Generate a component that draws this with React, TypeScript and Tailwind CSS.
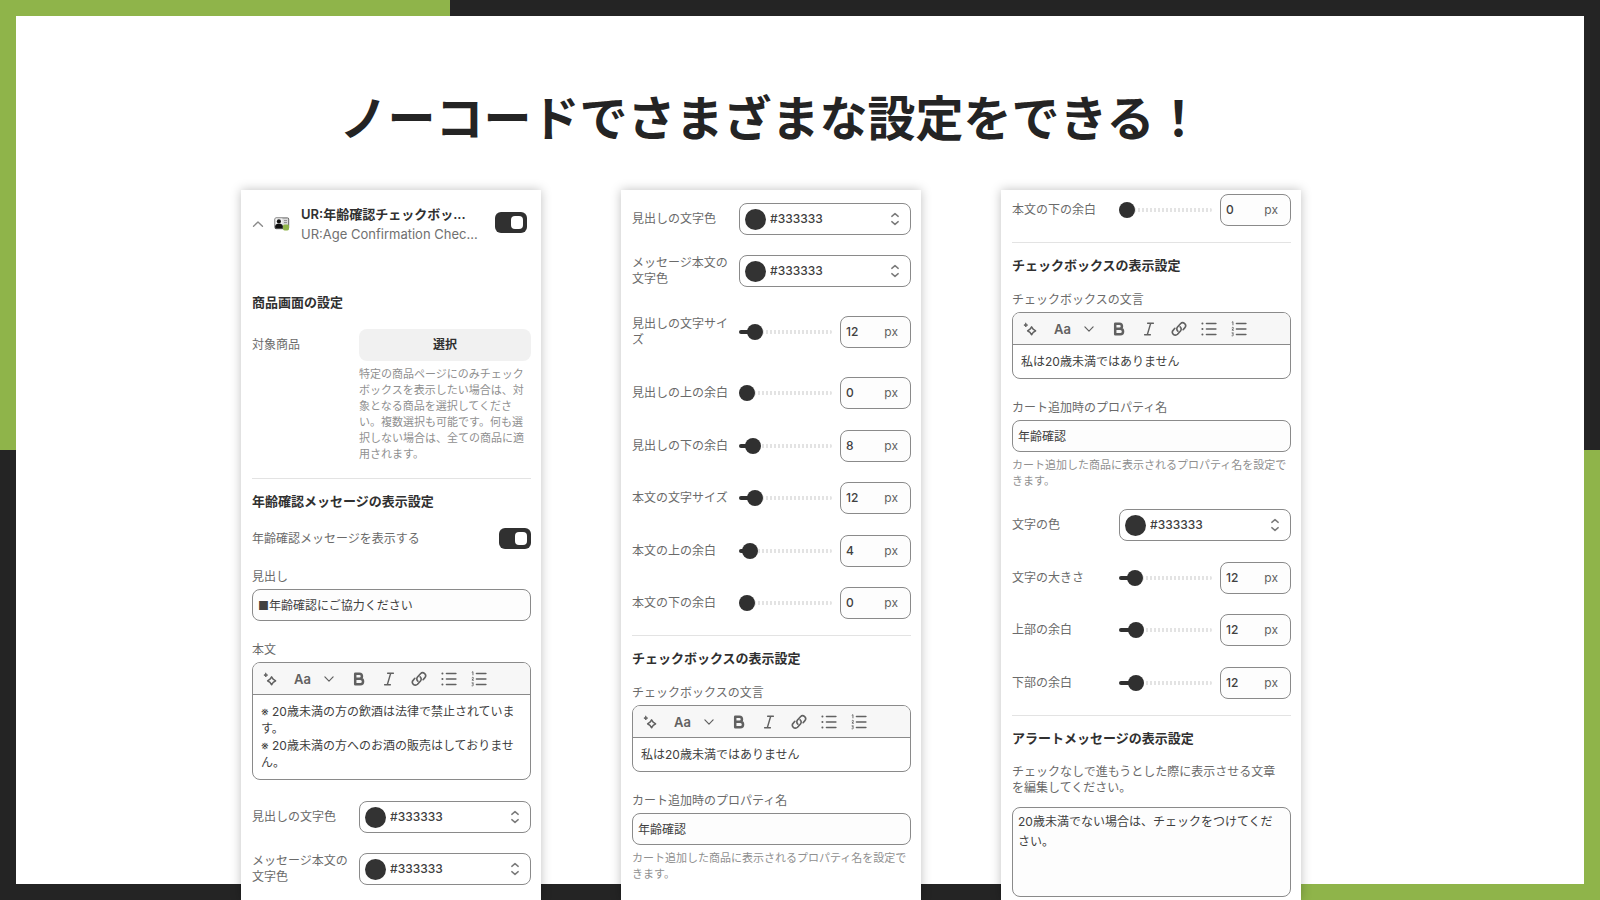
import { useId, useState } from 'react';
import type { CSSProperties, ReactNode } from 'react';
import clsx from 'clsx';

function Stroke({ children, size = 14 }: { children: ReactNode; size?: number }) {
  return (
    <svg
      width={size}
      height={size}
      viewBox="0 0 14 14"
      fill="none"
      stroke="currentColor"
      strokeWidth="1.4"
      strokeLinecap="round"
      strokeLinejoin="round"
      aria-hidden="true"
    >
      {children}
    </svg>
  );
}

const SparkleIcon = () => (
  <Stroke>
    <path d="M8.6 4.9 L10.2 7.2 L12.6 8.8 L10.2 10.4 L8.6 12.7 L7 10.4 L4.6 8.8 L7 7.2 Z" strokeWidth="1.5" />
    <path d="M2.8 1.2 L3.4 2.5 L4.7 3.1 L3.4 3.7 L2.8 5 L2.2 3.7 L0.9 3.1 L2.2 2.5 Z" fill="currentColor" strokeWidth="0.8" />
  </Stroke>
);

const BoldIcon = () => (
  <Stroke>
    <path d="M3.2 1.7 H7.4 A2.55 2.55 0 0 1 7.4 6.8 H3.2 Z M3.2 6.8 H8.3 A2.75 2.75 0 0 1 8.3 12.3 H3.2 Z" strokeWidth="2.5" />
  </Stroke>
);

const ItalicIcon = () => (
  <Stroke>
    <path d="M5.6 1.3 H11.4 M2.6 12.7 H8.4 M8.7 1.3 L5.3 12.7" />
  </Stroke>
);

const LinkIcon = () => (
  <Stroke size={16}>
    <path d="M6 8.9 A2.5 2.5 0 0 1 5.7 5.3 L8.3 2.4 A2.55 2.55 0 0 1 12 6 L10.6 7.6" />
    <path d="M8 5.1 A2.5 2.5 0 0 1 8.3 8.7 L5.7 11.6 A2.55 2.55 0 0 1 2 8 L3.4 6.4" />
  </Stroke>
);

const BulletListIcon = () => (
  <Stroke size={16}>
    <path d="M4.8 2.2 H13 M4.8 7 H13 M4.8 11.8 H13" />
    <path d="M1.2 2.2 H1.3 M1.2 7 H1.3 M1.2 11.8 H1.3" strokeWidth="1.7" />
  </Stroke>
);

const NumberListIcon = () => (
  <Stroke size={16}>
    <path d="M4.8 2.2 H13 M4.8 7 H13 M4.8 11.8 H13" />
    <path
      d="M1 1 L1.7 0.6 V3.4 M0.9 5.8 C1.4 5.2 2.3 5.5 2.1 6.3 L0.9 8 H2.3 M0.9 10.4 H2.1 L1.4 11.5 C2.6 11.5 2.4 13.4 0.9 13"
      strokeWidth="0.8"
    />
  </Stroke>
);

const ChevronDown = () => (
  <Stroke size={12}>
    <path d="M2.2 4.6 L7 9.4 L11.8 4.6" />
  </Stroke>
);

const ChevronUp = () => (
  <Stroke size={12}>
    <path d="M1.8 9.6 L7 4.6 L12.2 9.6" strokeWidth="1.6" />
  </Stroke>
);

const UpDownIcon = () => (
  <svg width="10" height="14" viewBox="0 0 10 14" fill="none" stroke="currentColor" strokeWidth="1.4" strokeLinecap="round" strokeLinejoin="round" aria-hidden="true">
    <path d="M1.8 4.4 L5 1.6 L8.2 4.4 M1.8 9.6 L5 12.4 L8.2 9.6" />
  </svg>
);

const AppIcon = () => (
  <svg width="16" height="14" viewBox="0 0 16 14" aria-hidden="true">
    <rect x="0.9" y="0.9" width="13.8" height="10.8" rx="1.2" fill="#dcdcdc" stroke="#555" strokeWidth="0.9" />
    <rect x="1.4" y="1.4" width="7" height="9.8" fill="#f4f4f4" />
    <circle cx="4.9" cy="4.4" r="2.1" fill="#111" />
    <path d="M1.2 11.4 V9.2 C1.2 7.4 3 6.8 5 6.8 S8.8 7.4 8.8 9.2 V11.4 Z" fill="#111" />
    <path d="M10 3.6 H13 M10 5.6 H13" stroke="#777" strokeWidth="0.8" />
    <rect x="9" y="7.4" width="6" height="6" rx="1.6" fill="#8fb44a" />
  </svg>
);

function Switch({ label, className }: { label: string; className?: string }) {
  const [on, setOn] = useState(true);
  return (
    <button
      type="button"
      role="switch"
      aria-checked={on}
      aria-label={label}
      onClick={() => setOn(!on)}
      className={clsx('flex h-[21px] w-8 shrink-0 items-center rounded-md px-1', on ? 'justify-end bg-[#303030]' : 'justify-start bg-[#8a8a8a]', className)}
    >
      <span className="h-[13px] w-3 rounded bg-white" />
    </button>
  );
}

function Heading({ children, className }: { children: ReactNode; className?: string }) {
  return <h2 className={clsx('text-[13px] leading-5 font-semibold text-[#303030]', className)}>{children}</h2>;
}

function Divider() {
  return <hr className="mt-4 mb-3 border-[#e3e3e3]" />;
}

function Help({ children }: { children: ReactNode }) {
  return <p className="mt-[5px] text-[11px] leading-4 text-[#8f8f8f]">{children}</p>;
}

function Row({ label, htmlFor, className, children }: { label: string; htmlFor: string; className?: string; children: ReactNode }) {
  return (
    <div className={clsx('flex min-h-8 items-center gap-2', className)}>
      <label htmlFor={htmlFor} className="w-[99px] shrink-0">
        {label}
      </label>
      <div className="flex min-w-0 flex-1 items-center gap-2">{children}</div>
    </div>
  );
}

function ColorRow({ label, className }: { label: string; className?: string }) {
  const id = useId();
  return (
    <Row label={label} htmlFor={id} className={className}>
      <div className="flex h-8 min-w-0 flex-1 items-center rounded-lg border border-[#8a8a8a] pr-[10px] pl-[5px] text-[#7a7a7a]">
        <span className="size-[21px] shrink-0 rounded-full bg-[#333333]" />
        <select id={id} defaultValue="#333333" className="h-full min-w-0 flex-1 appearance-none bg-transparent pl-1 font-medium text-[#404040]">
          <option>#333333</option>
          <option>#000000</option>
        </select>
        <UpDownIcon />
      </div>
    </Row>
  );
}

function SliderRow({ label, value, min = 0, max = 100, className }: { label: string; value: number; min?: number; max?: number; className?: string }) {
  const id = useId();
  const [current, setCurrent] = useState(value);
  const fill = { '--fill': `${((current - min) / (max - min)) * 100}%` } as CSSProperties;
  return (
    <Row label={label} htmlFor={id} className={className}>
      <input
        id={id}
        type="range"
        min={min}
        max={max}
        value={current}
        onChange={(e) => setCurrent(Number(e.target.value))}
        style={fill}
        className="h-4 min-w-0 flex-1 appearance-none bg-transparent [&::-webkit-slider-runnable-track]:h-1 [&::-webkit-slider-runnable-track]:rounded-full [&::-webkit-slider-runnable-track]:bg-[linear-gradient(to_right,#303030_var(--fill),transparent_var(--fill)),repeating-linear-gradient(to_left,#e3e3e3_0px,#e3e3e3_2px,transparent_2px,transparent_4px)] [&::-webkit-slider-thumb]:-mt-1.5 [&::-webkit-slider-thumb]:size-4 [&::-webkit-slider-thumb]:appearance-none [&::-webkit-slider-thumb]:rounded-full [&::-webkit-slider-thumb]:bg-[#303030]"
      />
      <div className="flex h-8 w-[71px] shrink-0 items-center rounded-lg border border-[#8a8a8a] bg-[#fdfdfd] pr-3 pl-[5px]">
        <input
          aria-label={`${label} (px)`}
          inputMode="numeric"
          value={current}
          onChange={(e) => setCurrent(Number(e.target.value) || 0)}
          className="min-w-0 flex-1 font-medium text-[#404040]"
        />
        <span className="text-[#616161]">px</span>
      </div>
    </Row>
  );
}

function TextField({ label, value, className }: { label: string; value: string; className?: string }) {
  const id = useId();
  return (
    <div className={clsx('flex flex-col gap-1', className)}>
      <label htmlFor={id}>{label}</label>
      <input id={id} defaultValue={value} className="h-8 rounded-lg border border-[#8a8a8a] bg-[#fdfdfd] px-[5px] pb-0.5 text-[#404040]" />
    </div>
  );
}

const tools = [
  { name: '太字', icon: <BoldIcon /> },
  { name: '斜体', icon: <ItalicIcon /> },
  { name: 'リンク', icon: <LinkIcon /> },
  { name: '箇条書き', icon: <BulletListIcon /> },
  { name: '番号付きリスト', icon: <NumberListIcon /> },
];

function Editor({ label, value, rows = 1, className }: { label: string; value: string; rows?: number; className?: string }) {
  const id = useId();
  return (
    <div className={clsx('flex flex-col gap-1', className)}>
      <label htmlFor={id}>{label}</label>
      <div className="overflow-hidden rounded-lg border border-[#8a8a8a]">
        <div className="flex h-8 items-center border-b border-[#8a8a8a] bg-[#f7f7f7] pl-0.5 text-[#616161]">
          <button type="button" aria-label="生成" className="flex w-[30px] justify-center">
            <SparkleIcon />
          </button>
          <button type="button" className="flex w-[59px] items-center justify-center gap-3 text-[13px] font-semibold">
            Aa
            <ChevronDown />
          </button>
          {tools.map((tool) => (
            <button key={tool.name} type="button" aria-label={tool.name} className="flex w-[30px] justify-center">
              {tool.icon}
            </button>
          ))}
        </div>
        <textarea id={id} rows={rows} defaultValue={value} className="block w-full resize-none overflow-hidden px-2 py-2 leading-[17px] text-[#404040]" />
      </div>
    </div>
  );
}

function Panel({ children, className }: { children: ReactNode; className?: string }) {
  return <section className={clsx('bg-white pr-[10px] pl-[11px] shadow-[0_0_10px_rgba(0,0,0,0.25)]', className)}>{children}</section>;
}

function CheckboxSettings() {
  return (
    <>
      <Divider />
      <Heading>チェックボックスの表示設定</Heading>
      <Editor className="mt-[17px]" label="チェックボックスの文言" value="私は20歳未満ではありません" />
      <TextField className="mt-[21px]" label="カート追加時のプロパティ名" value="年齢確認" />
      <Help>カート追加した商品に表示されるプロパティ名を設定できます。</Help>
    </>
  );
}

function MessagePanel() {
  return (
    <Panel className="pt-[14px]">
      <header className="flex items-center">
        <button type="button" aria-label="折りたたむ" className="w-[22px] text-[#8a8a8a]">
          <ChevronUp />
        </button>
        <AppIcon />
        <div className="ml-[11px] min-w-0 flex-1 text-[13px] leading-5 whitespace-nowrap">
          <p className="font-semibold text-[#303030]">UR:年齢確認チェックボッ...</p>
          <p className="text-[#707070]">UR:Age Confirmation Chec...</p>
        </div>
        <Switch label="アプリブロックを有効にする" className="mt-2 mr-1 self-start" />
      </header>

      <Heading className="mt-12">商品画面の設定</Heading>
      <div className="mt-[17px] flex gap-2">
        <span id="target-products" className="w-[99px] shrink-0 leading-8">
          対象商品
        </span>
        <div className="min-w-0 flex-1">
          <button type="button" aria-describedby="target-products" className="h-8 w-full rounded-lg bg-[#f1f1f1] font-bold text-[#303030]">
            選択
          </button>
          <Help>
            特定の商品ページにのみチェックボックスを表示したい場合は、対象となる商品を選択してください。複数選択も可能です。何も選択しない場合は、全ての商品に適用されます。
          </Help>
        </div>
      </div>

      <Divider />
      <Heading>年齢確認メッセージの表示設定</Heading>
      <div className="mt-[17px] flex items-center justify-between">
        <span>年齢確認メッセージを表示する</span>
        <Switch label="年齢確認メッセージを表示する" />
      </div>
      <TextField className="mt-5" label="見出し" value="■年齢確認にご協力ください" />
      <Editor
        className="mt-[21px]"
        label="本文"
        rows={4}
        value={'※ 20歳未満の方の飲酒は法律で禁止されています。\n※ 20歳未満の方へのお酒の販売はしておりません。'}
      />
      <ColorRow className="mt-[21px]" label="見出しの文字色" />
      <ColorRow className="mt-5" label="メッセージ本文の文字色" />
    </Panel>
  );
}

function StylePanel() {
  return (
    <Panel className="pt-[13px]">
      <ColorRow label="見出しの文字色" />
      <ColorRow className="mt-5" label="メッセージ本文の文字色" />
      <SliderRow className="mt-[29px]" label="見出しの文字サイズ" value={12} min={8} max={48} />
      <SliderRow className="mt-[29px]" label="見出しの上の余白" value={0} />
      <SliderRow className="mt-[21px]" label="見出しの下の余白" value={8} />
      <SliderRow className="mt-5" label="本文の文字サイズ" value={12} min={8} max={48} />
      <SliderRow className="mt-[21px]" label="本文の上の余白" value={4} />
      <SliderRow className="mt-5" label="本文の下の余白" value={0} />
      <CheckboxSettings />
    </Panel>
  );
}

function CheckboxPanel() {
  return (
    <Panel className="pt-1">
      <SliderRow label="本文の下の余白" value={0} />
      <CheckboxSettings />
      <ColorRow className="mt-5" label="文字の色" />
      <SliderRow className="mt-[21px]" label="文字の大きさ" value={12} min={8} max={48} />
      <SliderRow className="mt-5" label="上部の余白" value={12} />
      <SliderRow className="mt-[21px]" label="下部の余白" value={12} />
      <Divider />
      <Heading>アラートメッセージの表示設定</Heading>
      <label htmlFor="alert-message" className="mt-4 block pr-2">
        チェックなしで進もうとした際に表示させる文章を編集してください。
      </label>
      <textarea
        id="alert-message"
        defaultValue="20歳未満でない場合は、チェックをつけてください。"
        className="mt-[11px] block h-[90px] w-full resize-none rounded-lg border border-[#8a8a8a] bg-[#fdfdfd] py-1 pr-2 pl-[5px] leading-5 text-[#404040]"
      />
    </Panel>
  );
}

export default function App() {
  return (
    <div className="relative isolate flex min-h-screen flex-col overflow-hidden bg-[#242424] font-['Inter','Noto_Sans_CJK_JP',sans-serif]" lang="ja">
      <div className="absolute top-0 left-0 -z-10 size-[450px] bg-[#8fb44a]" />
      <div className="absolute right-0 bottom-0 -z-10 size-[450px] bg-[#8fb44a]" />
      <div className="absolute inset-4 -z-10 bg-white" />
      <main className="flex flex-1 flex-col pr-[74px] pl-4">
        <h1 className="pt-[87px] pb-[47px] text-center font-['Noto_Sans_CJK_JP',sans-serif] text-5xl leading-[56px] font-bold text-[#242424]">
          ノーコードでさまざまな設定をできる！
        </h1>
        <div className="mx-auto grid w-full max-w-[1060px] flex-1 grid-cols-3 gap-20 text-xs leading-4 text-[#6a6a6a]">
          <MessagePanel />
          <StylePanel />
          <CheckboxPanel />
        </div>
      </main>
    </div>
  );
}
